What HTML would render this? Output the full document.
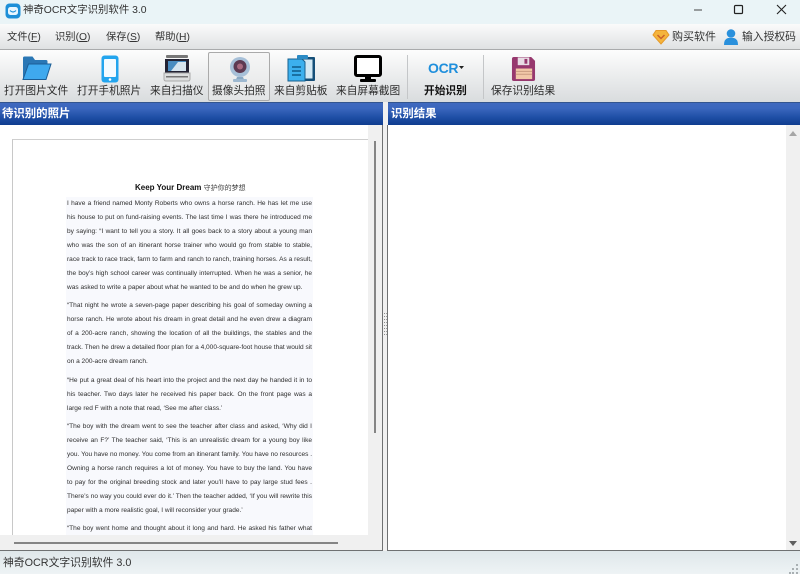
<!DOCTYPE html>
<html lang="zh"><head><meta charset="utf-8"><title>神奇OCR文字识别软件 3.0</title>
<style>
*{margin:0;padding:0;box-sizing:border-box}
html,body{width:800px;height:574px;overflow:hidden;background:#f0f0f0}
body{position:relative;font-family:"Liberation Sans","Noto Sans CJK SC",sans-serif;color:#222}
.a{position:absolute}
.t{position:absolute;white-space:nowrap;line-height:16px;font-size:10.7px;color:#333;filter:blur(.3px)}
.lab{position:absolute;top:84px;white-space:nowrap;line-height:15px;font-size:10.7px;text-align:center;color:#2a2a2a;filter:blur(.3px)}
.hd{position:absolute;top:102px;height:23px;background:linear-gradient(#3f69bf 0,#3a66bd 25%,#1f4fa6 65%,#0f3c8f 100%);border-top:1px solid #33558f;color:#fff;font-weight:bold;font-size:11.4px;line-height:23px;padding-left:2px;filter:blur(.15px)}
.l{position:absolute;left:67px;width:245px;height:14px;line-height:14px;font-size:6.55px;color:#2e2e2e;white-space:nowrap;text-align:justify;text-align-last:justify;font-family:"Liberation Sans",sans-serif;filter:blur(.25px);margin-top:1px}
.e{text-align-last:left}
u{text-decoration:underline}
</style></head><body>
<div class="a" style="left:0;top:0;width:800px;height:24px;background:#eaf4f7"></div>
<svg class="a" style="left:5px;top:3px" width="16" height="16" viewBox="0 0 16 16"><rect x=".5" y=".5" width="15" height="15" rx="4" fill="#1d8fd8"/><rect x="3" y="4" width="10" height="8" rx="2.5" fill="#e8f6ff"/><path d="M5 7.5q3 3 6 0" stroke="#1d8fd8" stroke-width="1.2" fill="none"/></svg>
<div class="t" style="left:23px;top:3px;font-size:10.4px;color:#333">神奇OCR文字识别软件 3.0</div>
<svg class="a" style="left:690px;top:3px" width="110" height="18" viewBox="0 0 110 18"><path d="M4 7h8" stroke="#444" stroke-width="1"/><rect x="44.5" y="2.5" width="8" height="8" rx="1" fill="none" stroke="#222" stroke-width="1.2"/><path d="M87 2l9 9M96 2l-9 9" stroke="#222" stroke-width="1.1"/></svg>

<div class="a" style="left:0;top:24px;width:800px;height:26px;background:linear-gradient(#fbfbfb,#dfe2e3);border-bottom:1px solid #a9abac"></div>
<div class="t" style="left:7px;top:30px;font-size:10.3px">文件(<u>F</u>)</div>
<div class="t" style="left:55px;top:30px;font-size:10.3px">识别(<u>O</u>)</div>
<div class="t" style="left:106px;top:30px;font-size:10.3px">保存(<u>S</u>)</div>
<div class="t" style="left:155px;top:30px;font-size:10.3px">帮助(<u>H</u>)</div>
<svg class="a" style="left:652px;top:29px" width="18" height="16" viewBox="0 0 18 16"><path d="M4 1.500h10L17 6l-8 9L1 6z" fill="#f5b43c" stroke="#e59a2a"/><path d="M5.500 6l3.500 3.500L12.500 6" stroke="#c9602a" stroke-width="1.500" fill="none"/></svg>
<div class="t" style="left:672px;top:29px;font-size:11px">购买软件</div>
<svg class="a" style="left:723px;top:28px" width="16" height="18" viewBox="0 0 16 18"><circle cx="8" cy="5.500" r="4.300" fill="#2a90dc"/><path d="M1 17q0-6 4-7h6q4 1 4 7z" fill="#2a90dc"/></svg>
<div class="t" style="left:742px;top:29px;font-size:10.800px">输入授权码</div>

<div class="a" style="left:0;top:50px;width:800px;height:52px;background:linear-gradient(#fdfdfd,#d9dcde)"></div>
<div class="a" style="left:208px;top:52px;width:62px;height:49px;border:1px solid #aaa;border-radius:2px;background:linear-gradient(#f6f6f6,#e3e5e6)"></div>
<div class="a" style="left:407px;top:55px;width:1px;height:44px;background:#c4c6c8"></div>
<div class="a" style="left:483px;top:55px;width:1px;height:44px;background:#c4c6c8"></div>

<svg class="a" style="left:21px;top:55px" width="31" height="26" viewBox="0 0 31 26"><path d="M2 24V3q0-1.500 1.500-1.500h8L14 5h11q1.500 0 1.500 1.500V9H8z" fill="#2a77b5"/><path d="M7.500 9H30L25 24.500H2z" fill="#3fa9ee" stroke="#1c5e96"/></svg>
<svg class="a" style="left:101px;top:55px" width="18" height="28" viewBox="0 0 18 28"><rect width="17" height="27" x=".5" y=".5" rx="3" fill="#23a5ee"/><rect x="3" y="4" width="12" height="18" rx="1" fill="#f4fbff"/><circle cx="9" cy="24.500" r="1.300" fill="#fff"/></svg>
<svg class="a" style="left:163px;top:54px" width="28" height="28" viewBox="0 0 28 28"><rect x="3" y="1" width="22" height="3" rx="1" fill="#777"/><path d="M2 5h24v14H2z" fill="#223"/><path d="M5 7h18v10H5z" fill="#4a8cc0"/><path d="M8 17l7-9h8v9z" fill="#d6e4ee"/><path d="M1 19h26v6q0 2-2 2H3q-2 0-2-2z" fill="#dcdede" stroke="#aaa"/><rect x="3" y="22" width="22" height="1.500" fill="#777"/></svg>
<svg class="a" style="left:228px;top:56px" width="24" height="26" viewBox="0 0 24 26"><circle cx="12" cy="11" r="10" fill="#a7c0d8"/><circle cx="12" cy="10.500" r="6.500" fill="#5e3a52"/><circle cx="12" cy="10.500" r="3" fill="#a86a80"/><path d="M9 21h6l1 2.500H8z" fill="#8aa9c4"/><rect x="5" y="23" width="14" height="3" rx="1" fill="#9db8d0"/></svg>
<svg class="a" style="left:286px;top:54px" width="31" height="29" viewBox="0 0 31 29"><rect x="11" y="3" width="18" height="24" rx="1" fill="#164f78"/><rect x="13.500" y="5.500" width="13" height="19" fill="#d4e9f4"/><path d="M2 5h14l3 3v19H2z" fill="#3cb0ee" stroke="#17618f"/><path d="M6 13h9M6 17h9M6 21h9" stroke="#0e5a88" stroke-width="1.500"/><rect x="11" y="1" width="11" height="4" rx="1" fill="#2b8ac4"/></svg>
<svg class="a" style="left:354px;top:55px" width="29" height="28" viewBox="0 0 29 28"><rect x="1.500" y="1.500" width="25" height="19" rx="1.500" fill="#fff" stroke="#000" stroke-width="3"/><path d="M11 21h6v3h-6z" fill="#000"/><rect x="6" y="24" width="16" height="3" rx="1" fill="#000"/></svg>
<div class="t" style="left:428px;top:60px;font-size:14px;font-weight:bold;color:#1f8fdc;line-height:17px;letter-spacing:-.3px;filter:none">OCR</div>
<svg class="a" style="left:459px;top:66px" width="6" height="4"><path d="M0 0h5L2.500 3z" fill="#222"/></svg>
<svg class="a" style="left:511px;top:56px" width="25" height="26" viewBox="0 0 26 27"><path d="M1 3q0-2 2-2h18l4 4v19q0 2-2 2H3q-2 0-2-2z" fill="#97386e"/><rect x="7" y="1.500" width="12" height="8" fill="#e8dde5"/><rect x="14" y="3" width="3" height="5" fill="#97386e"/><rect x="5" y="13" width="17" height="11" fill="#f2c7a8"/><path d="M5 16h17M5 19h17" stroke="#c99a80"/></svg>

<div class="lab" style="left:4px">打开图片文件</div>
<div class="lab" style="left:77px">打开手机照片</div>
<div class="lab" style="left:150px">来自扫描仪</div>
<div class="lab" style="left:212px">摄像头拍照</div>
<div class="lab" style="left:274px">来自剪贴板</div>
<div class="lab" style="left:336px">来自屏幕截图</div>
<div class="lab" style="left:424px;font-weight:bold;color:#111">开始识别</div>
<div class="lab" style="left:491px">保存识别结果</div>

<div class="hd" style="left:0;width:383px">待识别的照片</div>
<div class="hd" style="left:388px;width:412px;padding-left:3px">识别结果</div>

<div class="a" style="left:0;top:125px;width:383px;height:426px;background:#f0f0f0;border-right:1px solid #6f7172;border-bottom:1px solid #6f7172"></div>
<div class="a" style="left:0;top:125px;width:368px;height:410px;background:#fff"></div>
<div class="a" style="left:12px;top:139px;width:356px;height:396px;background:#fff;border-top:1px solid #cfcfcf;border-left:1px solid #c8c8c8"></div>
<div class="a" style="left:66px;top:197px;width:247px;height:338px;background:#f8f9fd"></div>
<div class="a" style="left:374px;top:141px;width:2px;height:292px;background:#858585"></div>
<div class="a" style="left:14px;top:542px;width:324px;height:2px;background:#858585"></div>

<div class="a" style="left:387px;top:125px;width:413px;height:426px;background:#fff;border-left:1px solid #6f7172;border-bottom:1px solid #6f7172"></div>
<div class="a" style="left:786px;top:125px;width:14px;height:425px;background:#f0f0f0"></div>
<svg class="a" style="left:786px;top:130px" width="14" height="8"><path d="M7 1l4 5H3z" fill="#a6a6a6"/></svg>
<svg class="a" style="left:786px;top:540px" width="14" height="8"><path d="M7 6l4-5H3z" fill="#606060"/></svg>
<div class="a" style="left:384px;top:313px;width:1px;height:22px;background:repeating-linear-gradient(#8a8a8a 0 1px,transparent 1px 3px)"></div>
<div class="a" style="left:386px;top:313px;width:1px;height:22px;background:repeating-linear-gradient(#a0a0a0 0 1px,transparent 1px 3px)"></div>

<div class="a" style="left:135px;top:182px;width:111px;line-height:12px;white-space:nowrap;font-size:8px;color:#111;filter:blur(.2px)"><b>Keep Your Dream</b> <span style="font-size:7px;color:#444;font-family:'Noto Sans CJK SC',sans-serif">守护你的梦想</span></div>

<div class="l" style="top:196px">I have a friend named Monty Roberts who owns a horse ranch. He has let me use</div>
<div class="l" style="top:210px">his house to put on fund-raising events. The last time I was there he introduced me</div>
<div class="l" style="top:224px">by saying: “I want to tell you a story. It all goes back to a story about a young man</div>
<div class="l" style="top:238px">who was the son of an itinerant horse trainer who would go from stable to stable,</div>
<div class="l" style="top:252px">race track to race track, farm to farm and ranch to ranch, training horses. As a result,</div>
<div class="l" style="top:266px">the boy’s high school career was continually interrupted. When he was a senior, he</div>
<div class="l e" style="top:280px">was asked to write a paper about what he wanted to be and do when he grew up.</div>
<div class="l" style="top:298px">“That night he wrote a seven-page paper describing his goal of someday owning a</div>
<div class="l" style="top:312px">horse ranch. He wrote about his dream in great detail and he even drew a diagram</div>
<div class="l" style="top:326px">of a 200-acre ranch, showing the location of all the buildings, the stables and the</div>
<div class="l" style="top:340px">track. Then he drew a detailed floor plan for a 4,000-square-foot house that would sit</div>
<div class="l e" style="top:354px">on a 200-acre dream ranch.</div>
<div class="l" style="top:373px">“He put a great deal of his heart into the project and the next day he handed it in to</div>
<div class="l" style="top:387px">his teacher. Two days later he received his paper back. On the front page was a</div>
<div class="l e" style="top:401px">large red F with a note that read, ‘See me after class.’</div>
<div class="l" style="top:419px">“The boy with the dream went to see the teacher after class and asked, ‘Why did I</div>
<div class="l" style="top:433px">receive an F?’ The teacher said, ‘This is an unrealistic dream for a young boy like</div>
<div class="l" style="top:447px">you. You have no money. You come from an itinerant family. You have no resources .</div>
<div class="l" style="top:461px">Owning a horse ranch requires a lot of money. You have to buy the land. You have</div>
<div class="l" style="top:475px">to pay for the original breeding stock and later you’ll have to pay large stud fees .</div>
<div class="l" style="top:489px">There’s no way you could ever do it.’ Then the teacher added, ‘If you will rewrite this</div>
<div class="l e" style="top:503px">paper with a more realistic goal, I will reconsider your grade.’</div>
<div class="l" style="top:521px">“The boy went home and thought about it long and hard. He asked his father what</div>

<div class="a" style="left:0;top:551px;width:800px;height:23px;background:linear-gradient(#dfe7ea,#eef3f5)"></div>
<div class="t" style="left:3px;top:555px;font-size:10.800px;color:#333">神奇OCR文字识别软件 3.0</div>
<svg class="a" style="left:789px;top:563px" width="11" height="11"><g fill="#a9b0b3"><rect x="7" y="1" width="2" height="2"/><rect x="3" y="5" width="2" height="2"/><rect x="7" y="5" width="2" height="2"/><rect x="0" y="9" width="2" height="2"/><rect x="3" y="9" width="2" height="2"/><rect x="7" y="9" width="2" height="2"/></g></svg>
</body></html>
